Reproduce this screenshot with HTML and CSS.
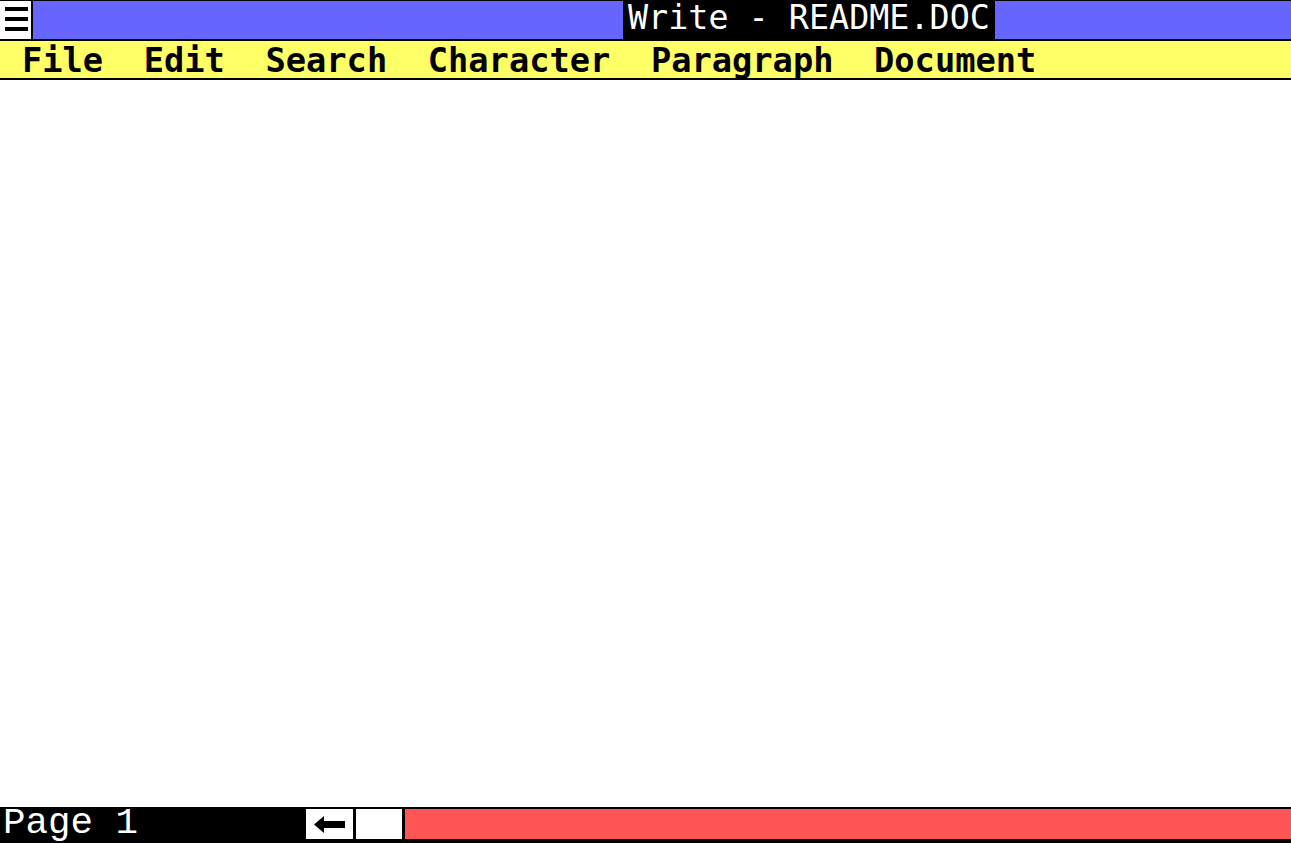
FILE: index.html
```html
<!DOCTYPE html>
<html>
<head>
<meta charset="utf-8">
<title>Write - README.DOC</title>
<link rel="stylesheet" href="styles.css">
</head>
<body>
<div class="window">
  <div class="titlebar">
    <div class="sysmenu">
      <span class="bar"></span>
      <span class="bar"></span>
      <span class="bar"></span>
    </div>
    <div class="caption">
      <span class="title">Write - README.DOC</span>
    </div>
  </div>
  <div class="menubar">
    <span class="menu-item">File</span>
    <span class="menu-item">Edit</span>
    <span class="menu-item">Search</span>
    <span class="menu-item">Character</span>
    <span class="menu-item">Paragraph</span>
    <span class="menu-item">Document</span>
  </div>
  <div class="document"></div>
  <div class="statusbar">
    <div class="page-label">Page 1</div>
    <div class="scroll-btn">
      <svg width="31" height="17" viewBox="0 0 31 17">
        <path d="M0 8.5 L10 0 L10 5 L31 5 L31 12 L10 12 L10 17 Z" fill="#000"/>
      </svg>
    </div>
    <div class="thumb"></div>
    <div class="track"></div>
  </div>
</div>
</body>
</html>
```

FILE: styles.css
```css
html, body {
  margin: 0;
  padding: 0;
  background: #ffffff;
}

.window {
  display: flex;
  flex-direction: column;
  width: 100%;
  height: 843px;
  overflow: hidden;
}

.titlebar {
  display: flex;
  height: 38px;
  border-top: 1px solid #000;
  border-bottom: 2px solid #000;
  background: #6666ff;
}

.sysmenu {
  width: 33px;
  background: #ffffff;
  border-right: 2px solid #000;
  display: flex;
  flex-direction: column;
  padding: 6px 0 0 5px;
  gap: 6px;
  box-sizing: border-box;
}

.sysmenu .bar {
  display: block;
  width: 23px;
  height: 4px;
  background: #000;
}

.caption {
  flex: 1;
  display: flex;
}

.title {
  margin-left: 590px;
  width: 372px;
  box-sizing: border-box;
  padding: 0 0 5px 5px;
  height: 38px;
  background: #000;
  color: #fff;
  font-family: "DejaVu Sans Mono", monospace;
  font-size: 33.4px;
  line-height: 33px;
  white-space: pre;
}

.menubar {
  display: flex;
  gap: 40.6px;
  height: 39px;
  box-sizing: border-box;
  padding: 2px 0 0 22px;
  background: #ffff66;
  border-bottom: 2px solid #000;
  font-family: "DejaVu Sans Mono", monospace;
  font-weight: bold;
  font-size: 33.7px;
  line-height: 35px;
  color: #000;
}

.menu-item {
  white-space: pre;
}

.document {
  flex: 1;
  background: #ffffff;
}

.statusbar {
  display: flex;
  height: 36px;
  box-sizing: border-box;
  padding: 2px 0 4px 0;
  background: #000;
}

.page-label {
  width: 306px;
  margin: -2px 0 -4px 0;
  box-sizing: border-box;
  padding-left: 3px;
  color: #fff;
  font-family: "Liberation Mono", monospace;
  font-size: 37.5px;
  line-height: 32px;
  white-space: pre;
}

.scroll-btn {
  width: 47px;
  background: #fff;
  display: flex;
  align-items: center;
  padding-left: 8px;
  box-sizing: border-box;
}

.scroll-btn svg {
  display: block;
}

.thumb {
  width: 46px;
  margin-left: 3px;
  background: #fff;
}

.track {
  flex: 1;
  margin-left: 3px;
  background: #ff5555;
}
```
